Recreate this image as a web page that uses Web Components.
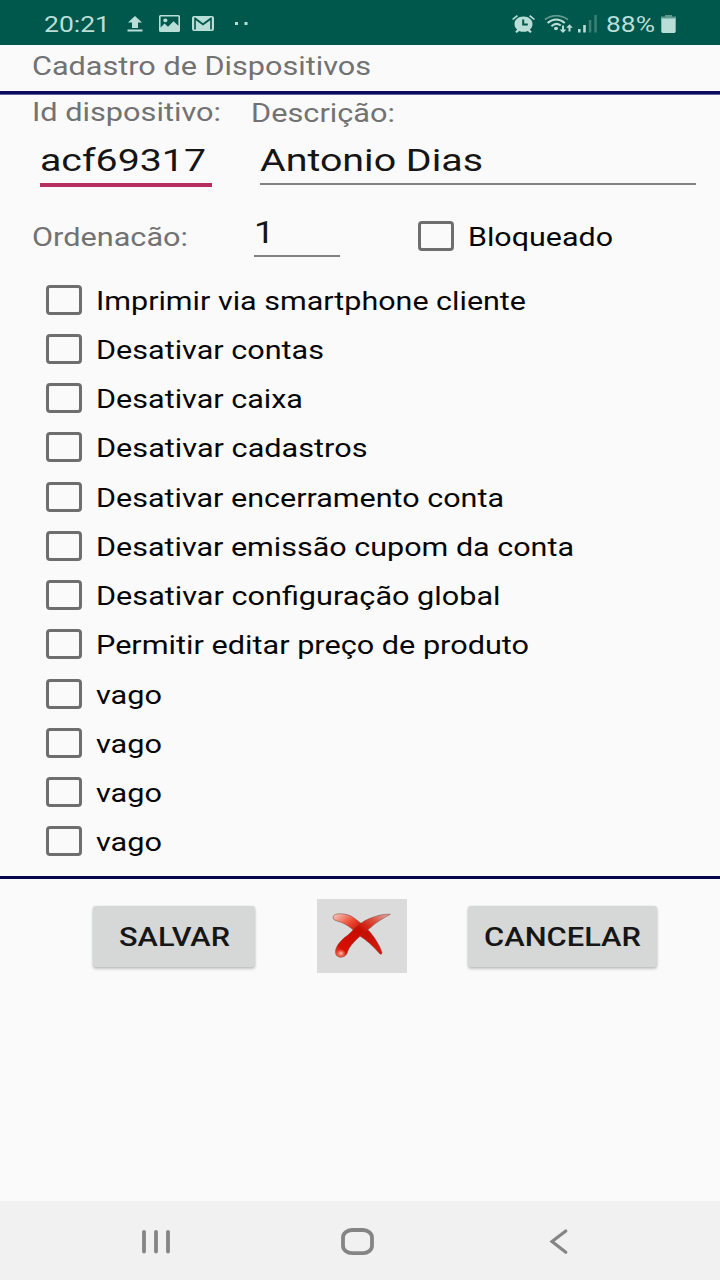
<!DOCTYPE html>
<html lang="pt-BR">
<head>
<meta charset="utf-8">
<title>Cadastro de Dispositivos</title>
<style>
  body {
    margin: 0;
    background: #fafafa;
    font-family: Roboto, "Noto Sans", sans-serif;
  }
</style>
</head>
<body>
<device-screen></device-screen>

<script>
// Text scaled on the x axis so that it takes exactly `width` pixels of the row.
class WideText extends HTMLElement {
  constructor() {
    super();
    this.attachShadow({ mode: "open" });
  }

  connectedCallback() {
    this.shadowRoot.innerHTML = `
      <style>
      :host {
        display: block;
        flex: none;
        white-space: nowrap;
        line-height: 32px;
        height: 30px;
        width: ${this.getAttribute("width")}px;
        font-size: ${this.getAttribute("size") || 25}px;
      }
      :host([size]) {
        line-height: 30px;
      }
      span {
        display: inline-block;
        transform-origin: 0 50%;
      }
      </style>
      <span><slot></slot></span>`;
    const span = this.shadowRoot.querySelector("span");
    const natural = span.getBoundingClientRect().width;
    span.style.transform = `scaleX(${this.getAttribute("width") / natural})`;
  }
}

class StatusBar extends HTMLElement {
  constructor() {
    super();
    this.attachShadow({ mode: "open" });
    this.shadowRoot.innerHTML = `
      <style>
      :host {
        display: flex;
        align-items: center;
        justify-content: space-between;
        box-sizing: border-box;
        height: 45px;
        padding: 2px 44px 0 44px;
        background: #00574b;
        color: #b9ded8;
      }
      .group {
        display: flex;
        align-items: center;
      }
      svg {
        display: block;
        flex: none;
        fill: #b9ded8;
      }
      .up { margin-left: 17px; }
      .photo { margin-left: 16px; }
      .mail { margin-left: 12px; }
      .dots { margin-left: 21px; }
      .wifi { margin-left: 9px; }
      .signal { margin-left: 5px; }
      .percent { margin-left: 9px; }
      .battery { margin-left: 6px; }
      </style>
      <div class="group">
        <wide-text width="66" size="22.3">20:21</wide-text>
        <svg class="up" width="16" height="16" viewBox="0 0 16 16"><path d="M8 0L15 6.5H11V12H5V6.5H1ZM.5 13.6H15.5V15.4H.5Z"/></svg>
        <svg class="photo" width="21" height="17" viewBox="0 0 21 17"><path fill-rule="evenodd" d="M1.5 0H19.5Q21 0 21 1.5V15.5Q21 17 19.5 17H1.5Q0 17 0 15.5V1.5Q0 0 1.5 0ZM1.6 1.5V12.6L5.5 8.5L9 11.8L14.5 6.2L19.4 10.7V1.5ZM6.4 3.5a2.1 1.9 0 1 1-.1 0Z"/></svg>
        <svg class="mail" width="22" height="15" viewBox="0 0 22 15"><path fill-rule="evenodd" d="M2 0H20Q22 0 22 2V13Q22 15 20 15H2Q0 15 0 13V2Q0 0 2 0ZM2.2 1.5V13.4H3.8V4.2L11 9.6L18.2 4.2V13.4H19.8V1.5H18.6L11 7.2L3.4 1.5Z"/></svg>
        <svg class="dots" width="14" height="4" viewBox="0 0 14 4"><rect x="0" y="0" width="3" height="3"/><rect x="9.5" y="0" width="3" height="3"/></svg>
      </div>
      <div class="group">
        <svg width="23" height="18" viewBox="0 0 23 18">
          <path fill-rule="evenodd" d="M11.5 1.6C16.8 1.6 20.5 5 20.5 9C20.5 11.3 19.4 13.2 17.8 14.6L19.8 16.8L18.2 18L15.8 15.9Q11.5 17.6 7.2 15.9L4.8 18L3.2 16.8L5.2 14.6C3.6 13.2 2.5 11.3 2.5 9C2.5 5 6.2 1.6 11.5 1.6ZM10.2 4.5V10.6H15.8V8.6H12.2V4.5Z"/>
          <path d="M0 4L4.8 0L6 1.2L1.2 5.1ZM23 4L18.2 0L17 1.2L21.8 5.1Z"/>
        </svg>
        <svg class="wifi" width="29" height="18" viewBox="0 0 29 18">
          <path d="M1 4.6Q12 -3.2 24 4.6" fill="none" stroke="#5f9a91" stroke-width="1.8"/>
          <path d="M3.6 8Q12.2 1 20.8 8M7.4 11.2Q12.2 6.8 16.8 10.6" fill="none" stroke="#b9ded8" stroke-width="2"/>
          <ellipse cx="12" cy="13.5" rx="2" ry="1.7"/>
          <path d="M18 10.5H20V14.4H22.4L19 18L15.6 14.4H18ZM24.5 16.5H26.5V12.8H28.8L25.5 9.2L22.2 12.8H24.5Z"/>
        </svg>
        <svg class="signal" width="19" height="18" viewBox="0 0 19 18">
          <path d="M0 14H2.6V17.5H0ZM5.2 10H7.8V17.5H5.2Z"/>
          <path fill="#3c8075" d="M10.8 5H13.3V17.5H10.8ZM16.3 0H18.8V17.5H16.3Z"/>
        </svg>
        <wide-text class="percent" width="49" size="22.3">88%</wide-text>
        <svg class="battery" width="15" height="18" viewBox="0 0 15 18">
          <path fill="#5f9a91" d="M4 0H11V1.5H15V4H0V1.5H4Z"/>
          <path d="M.3 3.4H14.7V16.6Q14.7 18 13.3 18H1.7Q.3 18 .3 16.6Z"/>
        </svg>
      </div>`;
  }
}

class FieldInput extends HTMLElement {
  constructor() {
    super();
    this.attachShadow({ mode: "open" });
    this.shadowRoot.innerHTML = `
      <style>
      :host {
        display: block;
        box-sizing: border-box;
        color: #151515;
        border-bottom: 2px solid #828282;
      }
      :host([focused]) {
        border-bottom: 4px solid #b52e60;
      }
      </style>
      <slot></slot>`;
  }
}

class CheckItem extends HTMLElement {
  constructor() {
    super();
    this.attachShadow({ mode: "open" });
    this.shadowRoot.innerHTML = `
      <style>
      :host {
        display: flex;
        align-items: center;
        gap: 14px;
        color: #060606;
      }
      .box {
        box-sizing: border-box;
        flex: none;
        width: 36px;
        height: 30px;
        margin-bottom: 2px;
        border: 3px solid #6e6e6e;
        border-radius: 4px;
      }
      </style>
      <div class="box"></div>
      <slot></slot>`;
  }
}

class PushButton extends HTMLElement {
  constructor() {
    super();
    this.attachShadow({ mode: "open" });
    this.shadowRoot.innerHTML = `
      <style>
      :host {
        display: flex;
        align-items: center;
        justify-content: center;
        box-sizing: border-box;
        height: 61px;
        padding-top: 2px;
        border-radius: 3px;
        background: #d6d8d7;
        box-shadow: 0 2px 3px rgba(0, 0, 0, 0.22), 0 0 2px rgba(0, 0, 0, 0.12);
        color: #161616;
        font-weight: 500;
      }
      </style>
      <slot></slot>`;
  }
}

class DeleteButton extends HTMLElement {
  constructor() {
    super();
    this.attachShadow({ mode: "open" });
    this.shadowRoot.innerHTML = `
      <style>
      :host {
        display: block;
        height: 74px;
        background: #dbdbdb;
      }
      svg {
        display: block;
      }
      </style>
      <svg width="90" height="74" viewBox="36 27 270 222">
        <defs>
          <linearGradient id="down" x1="0" y1="0" x2="1" y2="1">
            <stop offset="0" stop-color="#f6d0c8"/>
            <stop offset=".28" stop-color="#ee4a32"/>
            <stop offset=".5" stop-color="#c40b00"/>
            <stop offset="1" stop-color="#d81b08"/>
          </linearGradient>
          <linearGradient id="rise" x1="0" y1="1" x2="1" y2="0">
            <stop offset="0" stop-color="#ee6450"/>
            <stop offset=".16" stop-color="#d80f00"/>
            <stop offset=".55" stop-color="#c80c00"/>
            <stop offset=".78" stop-color="#dd5140"/>
            <stop offset="1" stop-color="#dcb5b0"/>
          </linearGradient>
          <radialGradient id="shine">
            <stop offset="0" stop-color="#ffc9bd"/>
            <stop offset="1" stop-color="#ff6a50" stop-opacity="0"/>
          </radialGradient>
        </defs>
        <path fill="url(#down)" stroke="#84413b" stroke-width="1.6" d="M84 81C86 67 124 69 143 81C162 94 181 110 195 126C211 146 225 168 231 188Q230 195 225 192C206 170 184 149 161 136C143 115 120 99 96 93Q83 90 84 81Z"/>
        <path fill="url(#rise)" stroke="#84413b" stroke-width="1.6" d="M256 73C237 83 215 96 196 113C168 136 138 158 128 184C125 202 103 208 93 194C86 176 104 152 128 136C143 122 158 104 178 93C203 80 233 71 256 73Z"/>
        <ellipse cx="108" cy="190" rx="15" ry="13" fill="url(#shine)"/>
      </svg>`;
  }
}

class NavigationBar extends HTMLElement {
  constructor() {
    super();
    this.attachShadow({ mode: "open" });
    this.shadowRoot.innerHTML = `
      <style>
      :host {
        display: flex;
        align-items: center;
        box-sizing: border-box;
        height: 79px;
        padding: 2px 0 0 141px;
        background: #f1f1f1;
      }
      svg {
        display: block;
        fill: none;
        stroke: #858585;
        stroke-width: 3.8;
        stroke-linecap: round;
      }
      .home { margin-left: 170px; }
      .back { margin-left: 175px; }
      </style>
      <svg width="30" height="28" viewBox="0 0 30 28"><path d="M3 3.8V23.6M15 3.8V23.6M27 3.8V23.6"/></svg>
      <svg class="home" width="33" height="28" viewBox="0 0 33 28"><rect x="2" y="2" width="29" height="23.2" rx="9" ry="7.5"/></svg>
      <svg class="back" width="20" height="28" viewBox="0 0 20 28"><path stroke-width="3.2" d="M16.8 3L3 13.6L16.8 24.2"/></svg>`;
  }
}

class DeviceScreen extends HTMLElement {
  constructor() {
    super();
    this.attachShadow({ mode: "open" });
  }

  connectedCallback() {
    // label, width of the label
    const options = [
      ["Imprimir via smartphone cliente", 430],
      ["Desativar contas", 228],
      ["Desativar caixa", 207],
      ["Desativar cadastros", 271.5],
      ["Desativar encerramento conta", 408],
      ["Desativar emissão cupom da conta", 478],
      ["Desativar configuração global", 404.5],
      ["Permitir editar preço de produto", 433],
      ["vago", 66],
      ["vago", 66],
      ["vago", 66],
      ["vago", 66],
    ];

    this.shadowRoot.innerHTML = `
      <style>
      :host {
        display: flex;
        flex-direction: column;
        width: 720px;
        height: 1280px;
        color: #727272;
      }
      .title {
        box-sizing: border-box;
        height: 46px;
        padding: 6px 0 0 32px;
      }
      hr {
        flex: none;
        box-sizing: border-box;
        width: 100%;
        height: 3px;
        margin: 0;
        border: 0;
        background: #06064f;
      }
      hr.top {
        height: 4px;
        border-bottom: 1px solid #63619a;
        background: #0c0a5c;
      }
      .fields {
        display: grid;
        grid-template-columns: 219px 1fr;
        box-sizing: border-box;
        height: 107px;
        padding: 2px 24px 0 32px;
      }
      .fields .description {
        padding-top: 1px;
      }
      .fields field-input {
        margin-top: 18px;
      }
      .id field-input {
        width: 172px;
        height: 42px;
        margin-left: 8px;
      }
      .description field-input {
        height: 40px;
        margin: 17px 0 0 9px;
      }
      .order {
        display: flex;
        align-items: flex-start;
        box-sizing: border-box;
        height: 74px;
        padding-left: 32px;
      }
      .order > wide-text {
        margin-top: 20px;
      }
      .order field-input {
        box-sizing: border-box;
        width: 86px;
        height: 40px;
        margin: 15px 0 0 66px;
      }
      .order check-item {
        margin: 19px 0 0 78px;
      }
      .options {
        display: grid;
        grid-auto-rows: 49.25px;
        height: 600px;
        box-sizing: border-box;
        padding: 0 0 0 46px;
      }
      .actions {
        display: grid;
        grid-template-columns: 162px 90px 189px;
        column-gap: 61.5px;
        align-items: center;
        padding: 20px 0 0 93px;
      }
      navigation-bar {
        margin-top: auto;
      }
      </style>

      <status-bar></status-bar>
      <div class="title"><wide-text width="339">Cadastro de Dispositivos</wide-text></div>
      <hr class="top">
      <div class="fields">
        <div class="id">
          <wide-text width="189">Id dispositivo:</wide-text>
          <field-input focused><wide-text width="166" size="31.8">acf69317</wide-text></field-input>
        </div>
        <div class="description">
          <wide-text width="144">Descrição:</wide-text>
          <field-input><wide-text width="223" size="31.8">Antonio Dias</wide-text></field-input>
        </div>
      </div>
      <div class="order">
        <wide-text width="156">Ordenacão:</wide-text>
        <field-input><wide-text width="20.5" size="31.8">1</wide-text></field-input>
        <check-item><wide-text width="145">Bloqueado</wide-text></check-item>
      </div>
      <div class="options">
        ${options.map(([label, width]) => `<check-item><wide-text width="${width}">${label}</wide-text></check-item>`).join("")}
      </div>
      <hr>
      <div class="actions">
        <push-button><wide-text width="111">SALVAR</wide-text></push-button>
        <delete-button></delete-button>
        <push-button><wide-text width="157">CANCELAR</wide-text></push-button>
      </div>
      <navigation-bar></navigation-bar>`;
  }
}

customElements.define("wide-text", WideText);
customElements.define("status-bar", StatusBar);
customElements.define("field-input", FieldInput);
customElements.define("check-item", CheckItem);
customElements.define("push-button", PushButton);
customElements.define("delete-button", DeleteButton);
customElements.define("navigation-bar", NavigationBar);
customElements.define("device-screen", DeviceScreen);
</script>
</body>
</html>
